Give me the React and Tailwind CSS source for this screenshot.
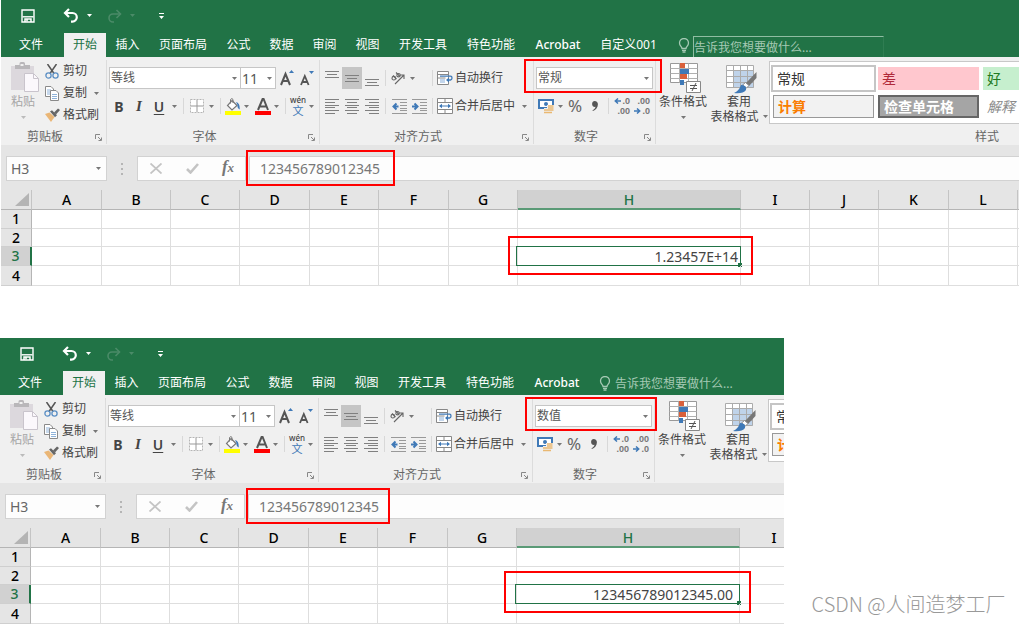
import React, { useState } from 'react';

const Caret = ({ className = '' }) => (
  <svg className={className} width="5" height="3" viewBox="0 0 5 3" fill="currentColor" aria-hidden="true">
    <path d="M0 0h5L2.500 3z" />
  </svg>
);

const CaretButton = ({ label, className = '' }) => (
  <button type="button" aria-label={label} className={`w-[10px] h-full flex items-center justify-center text-[#777] shrink-0 ${className}`}>
    <Caret />
  </button>
);

const IconButton = ({ label, className = 'w-5', children }) => (
  <button type="button" aria-label={label} className={`h-full flex items-center justify-center shrink-0 ${className}`}>
    {children}
  </button>
);

const Sep = ({ className = 'mx-1' }) => <span className={`w-px h-4 bg-[#d8d8d8] shrink-0 ${className}`} />;

/* ---------- icons ---------- */

const SaveIcon = () => (
  <svg width="14" height="14" viewBox="0 0 14 14" fill="none" stroke="#fff" strokeWidth="1.4">
    <path d="M1 1h12v12H1z" />
    <path d="M1.500 7.800h11" />
    <path d="M4 13v-3h6v3M6 10.500v2" strokeWidth="1.500" />
  </svg>
);

const UndoIcon = () => (
  <svg width="16" height="15" viewBox="0 0 16 15" fill="none" stroke="currentColor" strokeWidth="2.200">
    <path d="M6 1 2 5l4 4" />
    <path d="M2 5h7.500a4.200 4.200 0 0 1 0 8.600H8" />
  </svg>
);

const RedoIcon = () => (
  <svg width="15" height="14" viewBox="0 0 15 14" fill="none" stroke="currentColor" strokeWidth="1.600">
    <path d="m9.500 1 4 4-4 4" />
    <path d="M13.500 5H6a4 4 0 0 0 0 8h1" />
  </svg>
);

const BulbIcon = () => (
  <svg width="12" height="15" viewBox="0 0 12 15" fill="none" stroke="#a5c9b4" strokeWidth="1.300">
    <path d="M4 10.500C4 8.500 1.500 8 1.500 5a4.500 4.500 0 0 1 9 0c0 3-2.500 3.500-2.500 5.500z" />
    <path d="M4 12.300h4M4.500 14h3" />
  </svg>
);

const PasteIcon = () => (
  <svg width="28" height="31" viewBox="0 0 28 31">
    <path d="M0 4h23v24H0z" fill="#dcd8dd" />
    <path d="M4 3h4.500V1.500Q8.500 0 10 0h2.500Q14 0 14 1.500V3H19v4H4z" fill="#b9b7ba" />
    <path d="M9.500 2h3v2h-3z" fill="#f0f0f0" />
    <path d="M13.500 11.500h9l5 5v13h-14z" fill="#fbf8fc" stroke="#c9c4cc" />
    <path d="M22.500 11.500v5h5" fill="none" stroke="#c9c4cc" />
  </svg>
);

const CutIcon = () => (
  <svg width="14" height="15" viewBox="0 0 14 15" fill="none">
    <path d="M2.500 0 9 9.500M11.500 0 5 9.500" stroke="#555" strokeWidth="1.500" />
    <circle cx="3.500" cy="11.500" r="2.600" stroke="#5b8fc4" strokeWidth="1.300" />
    <circle cx="10.500" cy="11.500" r="2.600" stroke="#5b8fc4" strokeWidth="1.300" />
  </svg>
);

const CopyIcon = () => (
  <svg width="14" height="15" viewBox="0 0 14 15" fill="#fff" stroke="#8a8a8a">
    <path d="M.5.5H6L8.500 3v7.500h-8z" />
    <path d="M2 4h4M2 6h4M2 8h4" stroke="#8fb3da" />
    <path d="M5.500 4.500H11L13.500 7v7.500h-8z" />
    <path d="M7 8.500h5M7 10.500h5M7 12.500h5" stroke="#8fb3da" />
  </svg>
);

const BrushIcon = () => (
  <svg width="15" height="14" viewBox="0 0 15 14">
    <path d="m0 6 4.500-1.500 5 4.500-3.500 5z" fill="#eab676" />
    <path d="m5 3.500 2-1.200 5 5-2 2z" fill="#666" />
    <path d="m9 4.500 4-4L15 2l-4 4.500z" fill="#666" />
  </svg>
);

const LauncherIcon = () => (
  <svg width="7" height="7" viewBox="0 0 7 7" fill="none" stroke="#888">
    <path d="M.5 5V.5H5M3 3l3 3M6.500 3.500v3h-3" />
  </svg>
);

const FontSizeIcon = ({ grow }) => (
  <svg width="15" height="16" viewBox="0 0 15 16" fill="none">
    {grow ? (
      <>
        <path d="m1 15 4.500-11L10 15M2.800 11h5.500" stroke="#555" strokeWidth="2" />
        <path d="m9 3 2.500-3L14 3z" fill="#3f79b7" />
      </>
    ) : (
      <>
        <path d="m1 15 3.800-9 3.800 9M2.500 12h4.800" stroke="#555" strokeWidth="1.800" />
        <path d="M9 1h5l-2.500 3z" fill="#3f79b7" />
      </>
    )}
  </svg>
);

const BorderIcon = () => (
  <svg width="14" height="14" viewBox="0 0 14 14" fill="none" stroke="#b5b5b5">
    <path d="M.5.5h13v13H.5z" fill="#fff" strokeDasharray="2 1" />
    <path d="M7 1v12M1 7h12" stroke="#999" />
  </svg>
);

const FillIcon = () => (
  <svg width="16" height="17" viewBox="0 0 16 17" fill="none">
    <path d="m7 2.500 5 5-5 4.500L2.500 7.500z" fill="#fff" stroke="#777" strokeWidth="1.200" />
    <path d="M5.500 5.500V1.500q1.500-2 2.500 0v3.500" stroke="#777" />
    <path d="M11 4q4 .5 3.800 7.500Q12 10 12.500 7z" fill="#3f79b7" />
    <path d="M0 13h16v4H0z" fill="#ffff00" />
  </svg>
);

const FontColorIcon = () => (
  <svg width="16" height="17" viewBox="0 0 16 17" fill="none">
    <path d="M3 12 8 0h.2L13 12M4.500 8.500h7" stroke="#555" strokeWidth="2" />
    <path d="M0 13h16v4H0z" fill="#ff0000" />
  </svg>
);

const LinesIcon = ({ lines, height = 15 }) => (
  <svg width="14" height={height} viewBox={`0 0 14 ${height}`} stroke="#808080">
    {lines.map(([x1, x2, y]) => (
      <path key={y} d={`M${x1} ${y + 0.5}H${x2}`} />
    ))}
  </svg>
);

const TOP = [[0, 14, 0], [2, 12, 3], [0, 14, 6]];
const MIDDLE = [[0, 14, 4], [2, 12, 7], [0, 14, 10]];
const BOTTOM = [[0, 14, 8], [2, 12, 11], [0, 14, 14]];
const LEFT = [[0, 14, 0], [0, 10, 3], [0, 14, 6], [0, 10, 8], [0, 14, 11], [0, 10, 14]];
const CENTER = [[0, 14, 0], [2, 12, 3], [0, 14, 6], [2, 12, 8], [0, 14, 11], [2, 12, 14]];
const RIGHT = [[0, 14, 0], [4, 14, 3], [0, 14, 6], [4, 14, 8], [0, 14, 11], [4, 14, 14]];

const IndentIcon = ({ right }) => (
  <svg width="15" height="15" viewBox="0 0 15 15" fill="none">
    <path d="M0 .5h15M8 3.500h7M8 6.500h7M8 9.500h7M8 11.500h7M0 14.500h15" stroke="#999" />
    <path d={right ? 'M0 7.500h4M2.500 4.500l3 3-3 3' : 'M6.500 7.500h-4M4.500 4.500l-3 3 3 3'} stroke="#3f79b7" strokeWidth="2" />
  </svg>
);

const OrientationIcon = () => (
  <svg width="14" height="13" viewBox="0 0 14 13" fill="none" stroke="#666" strokeWidth="1.100">
    <path d="m4 12 8.500-8.500M9 3h4v4" />
    <circle cx="2.800" cy="6.200" r="1.800" />
    <path d="m2 3.500 3.500 3.500M5 .5l4 4" />
    <circle cx="7.500" cy="3.200" r="1.700" />
  </svg>
);

const WrapIcon = () => (
  <svg width="16" height="16" viewBox="0 0 16 16" fill="none">
    <path d="M.5 1.500h11v13H.5z" fill="#fff" stroke="#888" />
    <path d="M3 9h5v4H3z" fill="#c3d6ec" />
    <path d="M.5 4.500h11M.5 8h8" stroke="#888" />
    <path d="M3 6.200h10.500q1.500 0 1.500 1.800t-1.500 2H10" stroke="#3f79b7" strokeWidth="1.300" />
    <path d="M12 7.500 9 10l3 2.500z" fill="#3f79b7" />
  </svg>
);

const MergeIcon = () => (
  <svg width="16" height="16" viewBox="0 0 16 16" fill="none">
    <path d="M.5.5h15v15H.5z" fill="#fff" stroke="#888" />
    <path d="M.5 4.500h15M.5 11.500h15M8 .5v4M8 11.500v4" stroke="#888" />
    <path d="M3 8h10" stroke="#3f79b7" />
    <path d="M5 5.800 2 8l3 2.200zM11 5.800 14 8l-3 2.200z" fill="#3f79b7" />
  </svg>
);

const MoneyIcon = () => (
  <svg width="16" height="15" viewBox="0 0 16 15" fill="none">
    <path d="M1 1h14v8H1z" fill="#fff" stroke="#3f79b7" strokeWidth="2" />
    <circle cx="8" cy="5" r="2" fill="#3f79b7" />
    <path d="M9 6h7v9H9zM6 9h4v6H6z" fill="#f0f0f0" />
    <path d="M10 7h5.500M10 9h5.500M10 11h5.500M6 11h4M6 13.500h8" stroke="#e9b872" strokeWidth="1.500" />
  </svg>
);

const DecimalIcon = ({ top, bottom, left }) => (
  <span className="relative flex flex-col w-4 text-[9px] leading-[10px] font-bold text-[#777] font-['Liberation_Sans',sans-serif]">
    <span className="text-right">{top}</span>
    <span className="text-right">{bottom}</span>
    <svg className={left ? 'absolute left-0 top-[2px]' : 'absolute left-0 bottom-[2px]'} width="7" height="6" viewBox="0 0 7 6" fill="none" stroke="#3f79b7" strokeWidth="1.500">
      <path d={left ? 'M7 3H1.500M4 .5 1.300 3 4 5.500' : 'M0 3h5.500M3 .5 5.700 3 3 5.500'} />
    </svg>
  </span>
);

const ConditionalIcon = () => (
  <svg width="31" height="31" viewBox="0 0 31 31" fill="none">
    <path d="M.5 1.500h27v19H.5z" fill="#fff" stroke="#999" />
    <path d="M.5 6.500h27M.5 11.500h27M.5 16.500h27M9.500 1.500v19M18.500 1.500v19" stroke="#b0b0b0" />
    <path d="M10 1h5v5h-5zM10 12h7v5h-7z" fill="#d9603b" />
    <path d="M10 7h9v5h-9zM10 18h4v5h-4z" fill="#3f79b7" />
    <path d="M16.500 19.500h14v11h-14z" fill="#fff" stroke="#888" />
    <path d="M20 23.500h7M20 26.500h7M26 21l-4 8" stroke="#555" />
  </svg>
);

const TableFormatIcon = () => (
  <svg width="31" height="29" viewBox="0 0 31 29" fill="none">
    <path d="M.5.5h27v22H.5z" fill="#fff" />
    <path d="M8 6h20v17H8z" fill="#bfd3ea" />
    <path d="M.5.500h27v22H.5zM.5 5.500h27M.5 11.500h27M.5 17.500h27M7.500.5v22M14.500.5v22M21.500.5v22" stroke="#ababab" />
    <path d="M30.500 7v6L23 21l-3-3z" fill="#777" />
    <path d="m19.500 17.500 3.500 3-2.500 2.500-4-3z" fill="#fff" stroke="#888" />
    <path d="M15 20q6 0 5 5-3 4-12 3 5-2 7-8z" fill="#3f79b7" />
  </svg>
);

/* ---------- ribbon ---------- */

const Group = ({ label, className = '', children }) => (
  <section aria-label={label} className={`flex flex-col shrink-0 border-r border-[#dcdcdc] ${className}`}>
    <div className="h-[70px] pt-[7px]">{children}</div>
    <div className="flex h-[14px] items-center text-[#666]">
      <span className="flex-1 text-center pr-[6px] leading-[14px]">{label}</span>
      <button type="button" aria-label={`${label}设置`} className="pr-1"><LauncherIcon /></button>
    </div>
  </section>
);

const Combo = ({ label, value, options, className = '' }) => {
  const [current, setCurrent] = useState(value);
  return (
    <div className={`grid items-center bg-white border border-[#c6c6c6] h-[22px] ${className}`}>
      <select
        aria-label={label}
        value={current}
        onChange={(e) => setCurrent(e.target.value)}
        className="appearance-none col-start-1 row-start-1 w-full h-full pl-px bg-transparent text-[#555] outline-none"
      >
        {options.map((o) => <option key={o}>{o}</option>)}
      </select>
      <Caret className="col-start-1 row-start-1 justify-self-end mr-[3px] text-[#777] pointer-events-none" />
    </div>
  );
};

const ClipboardGroup = () => (
  <Group label="剪贴板" className="w-[106px]">
    <div className="flex">
      <button type="button" className="flex flex-col items-center w-[44px] text-[#a6a6a6]">
        <span className="-mt-[5px] ml-1"><PasteIcon /></span>
        <span className="leading-4 mt-px">粘贴</span>
        <Caret className="mt-[6px] text-[#bbb]" />
      </button>
      <div className="flex flex-col -mt-[7px] text-[#444]">
        <button type="button" className="flex items-center gap-1 h-[22px]"><CutIcon />剪切</button>
        <div className="flex items-center h-[22px]">
          <button type="button" className="flex items-center gap-1"><CopyIcon />复制</button>
          <CaretButton label="复制选项" className="ml-1" />
        </div>
        <button type="button" className="flex items-center gap-[3px] h-[22px]"><BrushIcon />格式刷</button>
      </div>
    </div>
  </Group>
);

const FontGroup = () => (
  <Group label="字体" className="w-[213px]">
    <div className="flex items-center h-[22px] pl-[2px]">
      <Combo label="字体" value="等线" options={['等线', '宋体', '黑体']} className="w-[132px]" />
      <Combo label="字号" value="11" options={['11', '12', '14']} className="w-[36px] -ml-px text-[14px]" />
      <IconButton label="增大字号" className="w-5 ml-px"><FontSizeIcon grow /></IconButton>
      <IconButton label="减小字号"><FontSizeIcon /></IconButton>
    </div>
    <div className="flex items-center h-[22px] mt-[6px] pl-[2px] text-[14px] text-[#444]">
      <IconButton label="加粗"><b>B</b></IconButton>
      <IconButton label="倾斜"><i className="font-semibold text-[15px] font-['Liberation_Serif',serif]">I</i></IconButton>
      <IconButton label="下划线"><u className="font-semibold underline-offset-2">U</u></IconButton>
      <CaretButton label="下划线选项" className="w-2" />
      <Sep />
      <IconButton label="边框" className="w-[18px]"><BorderIcon /></IconButton>
      <CaretButton label="边框选项" />
      <Sep />
      <IconButton label="填充颜色" className="w-4"><FillIcon /></IconButton>
      <CaretButton label="填充颜色选项" />
      <IconButton label="字体颜色" className="w-4 ml-1"><FontColorIcon /></IconButton>
      <CaretButton label="字体颜色选项" />
      <Sep />
      <button type="button" className="flex flex-col items-center w-4 shrink-0">
        <span className="text-[8px] leading-[9px] font-medium">wén</span>
        <span className="text-[11px] leading-[13px] text-[#3f79b7]">文</span>
      </button>
      <CaretButton label="拼音选项" />
    </div>
  </Group>
);

const AlignGroup = () => (
  <Group label="对齐方式" className="w-[214px]">
    <div className="flex items-center h-[22px] pl-[2px] text-[#444]">
      <IconButton label="顶端对齐"><LinesIcon lines={TOP} /></IconButton>
      <IconButton label="垂直居中" className="w-5 bg-[#c5c5c5]"><LinesIcon lines={MIDDLE} /></IconButton>
      <IconButton label="底端对齐"><LinesIcon lines={BOTTOM} /></IconButton>
      <Sep className="mx-[3px]" />
      <IconButton label="方向" className="w-[18px]"><OrientationIcon /></IconButton>
      <CaretButton label="方向选项" />
      <Sep className="ml-[15px] mr-1" />
      <button type="button" className="flex items-center gap-[2px] whitespace-nowrap"><WrapIcon />自动换行</button>
    </div>
    <div className="flex items-center h-[22px] mt-[6px] pl-[2px] text-[#444]">
      <IconButton label="左对齐"><LinesIcon lines={LEFT} /></IconButton>
      <IconButton label="居中"><LinesIcon lines={CENTER} /></IconButton>
      <IconButton label="右对齐"><LinesIcon lines={RIGHT} /></IconButton>
      <Sep className="mx-[3px]" />
      <IconButton label="减少缩进量"><IndentIcon /></IconButton>
      <IconButton label="增加缩进量"><IndentIcon right /></IconButton>
      <Sep className="ml-[3px] mr-1" />
      <button type="button" className="flex items-center gap-[2px] whitespace-nowrap"><MergeIcon />合并后居中</button>
      <CaretButton label="合并选项" className="ml-1" />
    </div>
  </Group>
);

const NumberGroup = ({ format }) => (
  <Group label="数字" className="w-[122px]">
    <Combo label="数字格式" value={format} options={['常规', '数值', '货币']} className="w-[117px] ml-[2px]" />
    <div className="flex items-center h-[22px] mt-[6px] pl-[3px] text-[#666]">
      <IconButton label="会计数字格式" className="w-[18px]"><MoneyIcon /></IconButton>
      <CaretButton label="会计数字格式选项" />
      <IconButton label="百分比样式"><span className="text-[17px]">%</span></IconButton>
      <IconButton label="千位分隔样式">
        <svg width="6" height="10" viewBox="0 0 7 12" fill="#555"><path d="M3 0c2.500 0 4 1.500 4 4 0 4-2.500 7-6 8l-.5-1C3 10 4 8.500 4 7c-2 .5-4-1-4-3.500C0 1.500 1.500 0 3 0z" /></svg>
      </IconButton>
      <Sep className="mx-[3px]" />
      <IconButton label="增加小数位数"><DecimalIcon top=".0" bottom=".00" left /></IconButton>
      <IconButton label="减少小数位数"><DecimalIcon top=".00" bottom=".0" /></IconButton>
    </div>
  </Group>
);

const styleTile = 'w-[101px] h-[23px] pl-1 text-left text-[14px] leading-none shrink-0';

const StylesGroup = ({ wide }) => (
  <section aria-label="样式" className="flex flex-col flex-1 min-w-0">
    <div className="flex h-[70px] text-[#444] whitespace-nowrap">
      <button type="button" className="flex flex-col items-center w-[54px] shrink-0 pt-[2px]">
        <span className="ml-1"><ConditionalIcon /></span>
        <span className="leading-[15px] mt-px">条件格式</span>
        <Caret className="mt-[7px] text-[#777]" />
      </button>
      <button type="button" className="flex flex-col items-center w-[58px] shrink-0 pt-[5px]">
        <span className="ml-1"><TableFormatIcon /></span>
        <span className="leading-[15px]">套用</span>
        <span className="flex items-center gap-1 leading-[15px]">表格格式<Caret className="text-[#777]" /></span>
      </button>
      <div className="grid grid-cols-[repeat(3,101px)] gap-x-1 gap-y-[5px] content-start flex-1 h-[63px] mt-px ml-px bg-white border border-r-0 border-[#c8c8c8] overflow-hidden pl-[3px] pt-[5px]">
        <button type="button" className={`${styleTile} text-[#333] outline-2 outline-[#c5c5c5] bg-white`}>常规</button>
        {wide && <button type="button" className={`${styleTile} bg-[#ffc7ce] text-[#b02a3a]`}>差</button>}
        {wide && <button type="button" className={`${styleTile} bg-[#c6efce] text-[#217a21]`}>好</button>}
        <button type="button" className={`${styleTile} col-start-1 bg-[#f2f2f2] border border-[#999] text-[#fa7d00] font-bold`}>计算</button>
        {wide && <button type="button" className={`${styleTile} bg-[#a5a5a5] border-2 border-[#666] text-white font-bold`}>检查单元格</button>}
        {wide && <button type="button" className={`${styleTile} italic text-[#8a8a8a]`}>解释</button>}
      </div>
    </div>
    {wide && <div className="flex items-center justify-end h-[14px] pr-5 text-[#666]">样式</div>}
  </section>
);

const TABS = ['插入', '页面布局', '公式', '数据', '审阅', '视图', '开发工具', '特色功能'];

const TabBar = ({ wide }) => (
  <nav className="flex h-[24px] text-white whitespace-nowrap">
    <button type="button" className="w-[60px] mr-[3px] shrink-0">文件</button>
    <button type="button" className="w-[42px] shrink-0 bg-[#f0f0f0] text-[#217346]">开始</button>
    {TABS.map((t) => (
      <button key={t} type="button" className={`shrink-0 ${t.length > 2 ? 'w-[68px]' : 'w-[43px]'}`}>{t}</button>
    ))}
    <button type="button" className="w-[66px] shrink-0 font-medium">Acrobat</button>
    {wide && <button type="button" className="w-[75px] shrink-0">自定义001</button>}
    <label className={`flex items-center gap-[3px] ${wide ? 'ml-3' : 'ml-[9px]'}`}>
      <BulbIcon />
      <input
        type="text"
        aria-label="操作说明搜索"
        placeholder="告诉我您想要做什么..."
        className={`bg-transparent outline-none placeholder:text-[#a5c9b4] ${wide ? 'w-[191px] self-end h-[21px] border border-b-0 border-r-[#2f7d52] border-t-[#8fbda2] border-l-[#8fbda2]' : 'h-full pl-px w-[150px]'}`}
      />
    </label>
  </nav>
);

const TitleBar = () => (
  <div className="flex items-center h-[33px] pl-5 pb-[2px] text-white">
    <button type="button" aria-label="保存"><SaveIcon /></button>
    <button type="button" aria-label="撤消" className="ml-[28px]"><UndoIcon /></button>
    <button type="button" aria-label="撤消选项" className="ml-2"><Caret /></button>
    <button type="button" aria-label="恢复" className="ml-[15px] text-[#4b8b68]"><RedoIcon /></button>
    <button type="button" aria-label="恢复选项" className="ml-2 text-[#4b8b68]"><Caret /></button>
    <button type="button" aria-label="自定义快速访问工具栏" className="ml-6">
      <svg width="5" height="6" viewBox="0 0 5 6" fill="#fff"><path d="M0 0h5v1H0zM0 3h5L2.500 6z" /></svg>
    </button>
  </div>
);

/* ---------- formula bar and grid ---------- */

const FormulaBar = ({ formula }) => (
  <div className="flex bg-[#e5e5e5] pt-[11px] pb-[9px] pl-[5px] text-[14px] text-[#666]">
    <div className="flex items-center w-[101px] h-[25px] bg-[#fdfdfd] border border-[#d2d2d2] shrink-0">
      <input aria-label="名称框" defaultValue="H3" className="min-w-0 flex-1 pl-1 outline-none bg-transparent" />
      <CaretButton label="名称框选项" className="mr-[3px]" />
    </div>
    <div className="flex flex-col items-center justify-center gap-[3px] w-[30px] shrink-0">
      <span className="w-[2px] h-[2px] bg-[#b5b5b5]" />
      <span className="w-[2px] h-[2px] bg-[#b5b5b5]" />
      <span className="w-[2px] h-[2px] bg-[#b5b5b5]" />
    </div>
    <div className="flex items-center w-[109px] h-[25px] bg-[#fdfdfd] border border-[#d2d2d2] shrink-0">
      <IconButton label="取消" className="w-9">
        <svg width="12" height="11" viewBox="0 0 12 11" stroke="#c4c4c4" strokeWidth="1.800"><path d="m.5.5 11 10M11.500.5l-11 10" /></svg>
      </IconButton>
      <IconButton label="输入" className="w-9">
        <svg width="13" height="11" viewBox="0 0 13 11" fill="none" stroke="#c4c4c4" strokeWidth="2.600"><path d="m1 6 3.500 3.500L12 1" /></svg>
      </IconButton>
      <IconButton label="插入函数" className="w-9">
        <i className="font-['Liberation_Serif',serif] font-bold text-[17px] leading-none text-[#777] pb-1">f<span className="text-[13px]">x</span></i>
      </IconButton>
    </div>
    <input
      aria-label="编辑栏"
      defaultValue={formula}
      className="ml-[3px] flex-1 min-w-0 h-[25px] pl-[10px] bg-[#fdfdfd] border border-r-0 border-[#d2d2d2] outline-none text-[#777]"
    />
  </div>
);

const COLUMNS = [
  ['A', 70], ['B', 69], ['C', 69], ['D', 70], ['E', 69], ['F', 70], ['G', 69],
  ['H', 223], ['I', 69], ['J', 69], ['K', 70], ['L', 69],
];

const ROW_HEIGHTS = ['h-[19px]', 'h-[18px]', 'h-[19px]', 'h-[20px]'];

const Grid = ({ columns, value, valueClass }) => (
  <table className="table-fixed border-separate border-spacing-0 w-full bg-white text-[14px] leading-none text-black">
    <colgroup>
      <col style={{ width: 31 }} />
      {columns.map(([name, width]) => <col key={name} style={{ width }} />)}
      <col />
    </colgroup>
    <thead>
      <tr className="h-[20px] bg-[#e5e5e5]">
        <th className="p-0 border-r border-b border-b-[#b5b5b5] border-r-[#c4c4c4]">
          <svg className="ml-auto mr-[2px]" width="14" height="13" viewBox="0 0 14 13" fill="#b4b4b4"><path d="M14 0v13H0z" /></svg>
        </th>
        {columns.map(([name]) => (
          <th
            key={name}
            scope="col"
            className={`p-0 font-medium border-r border-r-[#c4c4c4] ${name === 'H' ? 'pt-px bg-[#d1d1d1] text-[#217346] border-b-2 border-b-[#5a9a76]' : 'border-b border-b-[#b5b5b5]'}`}
          >
            {name}
          </th>
        ))}
        <th className="p-0 border-b border-b-[#b5b5b5]" />
      </tr>
    </thead>
    <tbody>
      {ROW_HEIGHTS.map((height, i) => (
        <tr key={height + i} className={height}>
          <th
            scope="row"
            className={`p-0 font-medium border-b border-b-[#cfcfcf] ${i === 2 ? 'bg-[#d1d1d1] text-[#217346] border-r-2 border-r-[#217346]' : 'bg-[#e5e5e5] border-r border-r-[#b5b5b5]'}`}
          >
            {i + 1}
          </th>
          {columns.map(([name]) => (
            <td key={name} className="relative p-0 border-r border-b border-[#dedede] text-right">
              {name === 'H' && i === 2 && (
                <>
                  <span className={`block text-[#444] pt-px ${valueClass}`}>{value}</span>
                  <span className="absolute -left-[2px] -top-px -right-px -bottom-px border border-[#217346]" />
                  <span className="absolute -right-[2px] -bottom-[2px] w-1 h-1 bg-[#217346]" />
                </>
              )}
            </td>
          ))}
          <td className="p-0 border-b border-[#dedede]" />
        </tr>
      ))}
    </tbody>
  </table>
);

const ExcelWindow = ({ format, formula, value, valueClass, wide = false, marks }) => (
  <div className="relative overflow-hidden">
    <header className="bg-[#217346]">
      <TitleBar />
      <TabBar wide={wide} />
    </header>
    <div className="flex bg-[#f0f0f0] pt-[3px] pb-px">
      <ClipboardGroup />
      <FontGroup />
      <AlignGroup />
      <NumberGroup format={format} />
      <StylesGroup wide={wide} />
    </div>
    <FormulaBar formula={formula} />
    <Grid columns={wide ? COLUMNS : COLUMNS.slice(0, 9)} value={value} valueClass={valueClass} />
    {marks.map((m) => (
      <span key={m} className={`absolute border-2 border-[#ff0000] pointer-events-none ${m}`} />
    ))}
  </div>
);

const App = () => (
  <main className="bg-white text-[12px] font-['Noto_Sans','Noto_Sans_CJK_SC',sans-serif]">
    <div className="pl-px">
      <ExcelWindow
        wide
        format="常规"
        formula="123456789012345"
        value="1.23457E+14"
        valueClass="pr-[2px]"
        marks={[
          'left-[523px] top-[59px] w-[138px] h-[34px]',
          'left-[245px] top-[150px] w-[149px] h-[36px]',
          'left-[507px] top-[236px] w-[245px] h-[39px]',
        ]}
      />
    </div>
    <div className="flex items-end mt-[52px]">
      <div className="w-[76.9%] shrink-0">
        <ExcelWindow
          format="数值"
          formula="123456789012345"
          value="123456789012345.00"
          valueClass="pr-[6px]"
          marks={[
            'left-[525px] top-[59px] w-[132px] h-[34px]',
            'left-[246px] top-[150px] w-[144px] h-[36px]',
            'left-[504px] top-[233px] w-[247px] h-[42px]',
          ]}
        />
      </div>
      <p className="ml-7 pb-[6px] text-[20px] leading-7 text-[#999] font-light whitespace-nowrap font-['Noto_Sans_CJK_SC',sans-serif]">CSDN @人间造梦工厂</p>
    </div>
  </main>
);

export default App;
